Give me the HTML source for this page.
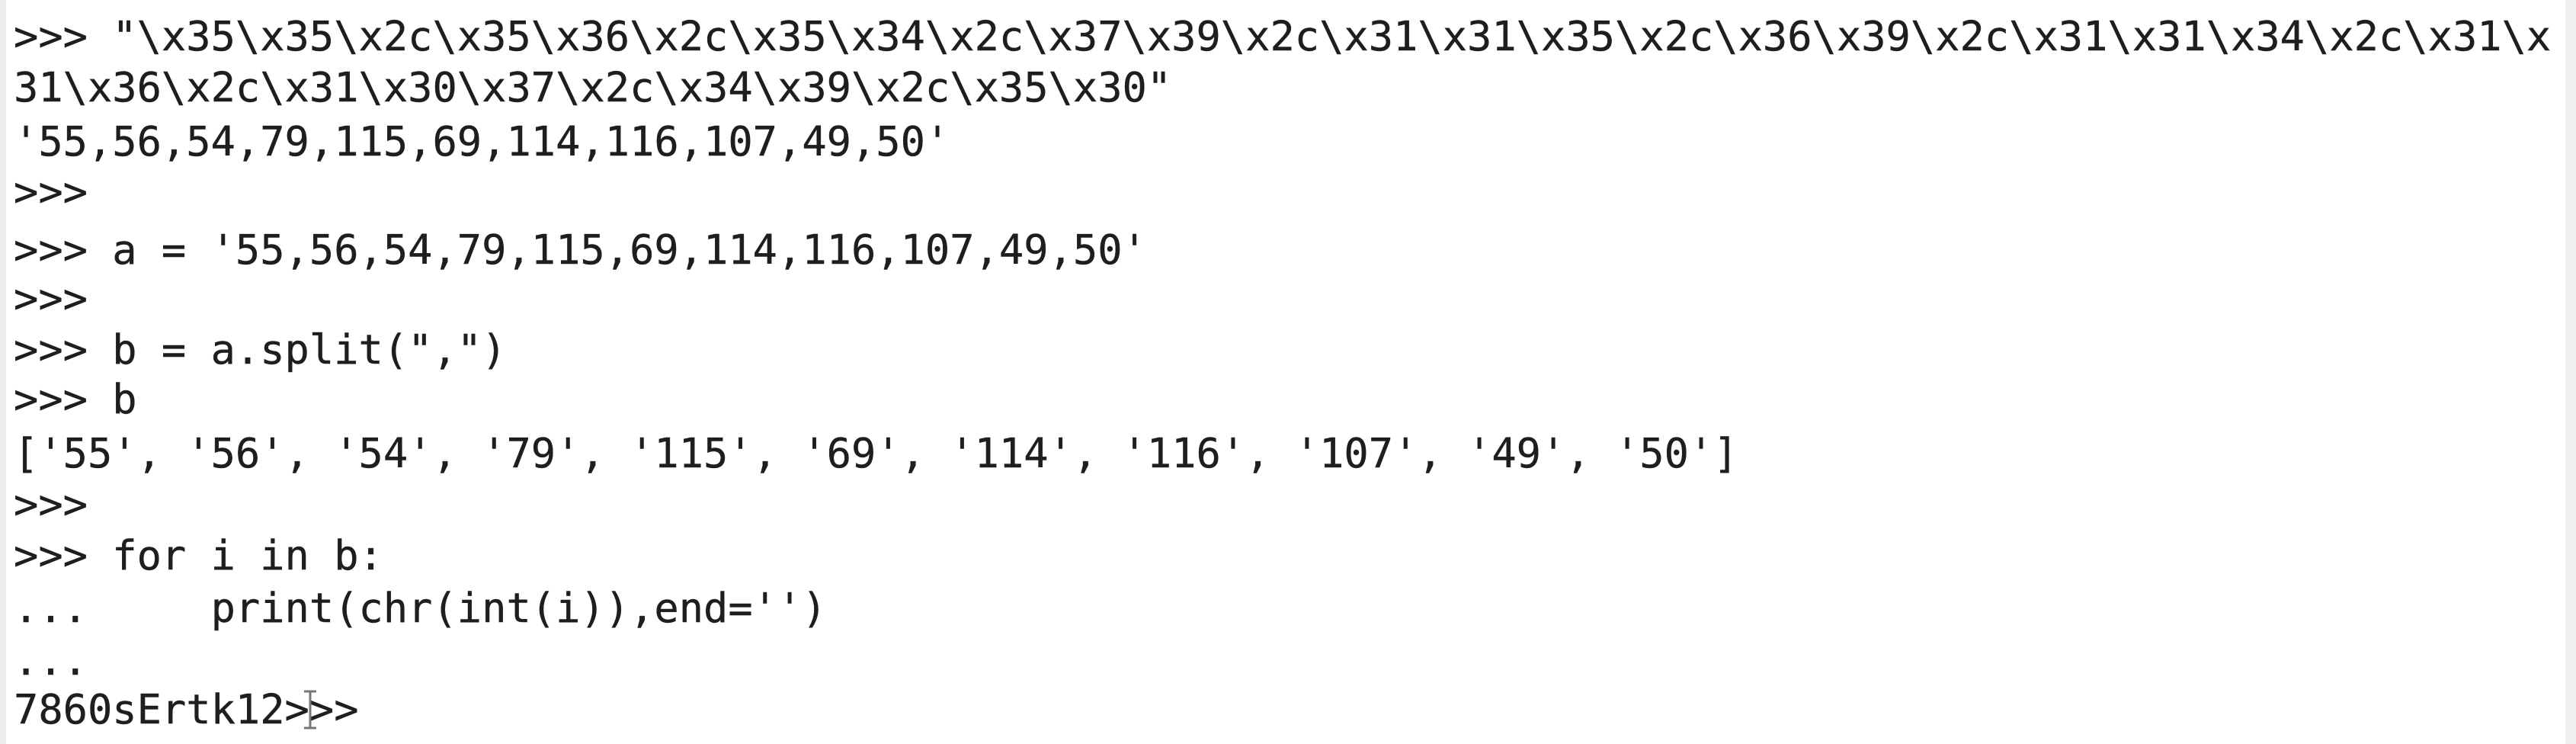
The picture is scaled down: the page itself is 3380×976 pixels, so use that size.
<!DOCTYPE html>
<html><head><meta charset="utf-8"><style>
html,body{margin:0;padding:0;}
body{width:3380px;height:976px;background:#fff;position:relative;overflow:hidden;}
.l{position:absolute;left:18px;height:68px;line-height:68px;font-family:"DejaVu Sans Mono","Liberation Mono",monospace;font-size:53.7px;color:#1e1e1e;white-space:pre;-webkit-text-stroke:0.4px #1e1e1e;}
.ls{position:absolute;left:0;top:0;width:8px;height:976px;background:#ececec;}
.rs{position:absolute;right:0;top:0;width:14px;height:976px;background:#efefef;}
</style></head><body>
<div class="ls"></div><div class="rs"></div>
<div class="l" style="top:14px">&gt;&gt;&gt; "\x35\x35\x2c\x35\x36\x2c\x35\x34\x2c\x37\x39\x2c\x31\x31\x35\x2c\x36\x39\x2c\x31\x31\x34\x2c\x31\x</div>
<div class="l" style="top:81px">31\x36\x2c\x31\x30\x37\x2c\x34\x39\x2c\x35\x30"</div>
<div class="l" style="top:152px">'55,56,54,79,115,69,114,116,107,49,50'</div>
<div class="l" style="top:218px">&gt;&gt;&gt;</div>
<div class="l" style="top:294px">&gt;&gt;&gt; a = '55,56,54,79,115,69,114,116,107,49,50'</div>
<div class="l" style="top:358px">&gt;&gt;&gt;</div>
<div class="l" style="top:425px">&gt;&gt;&gt; b = a.split(",")</div>
<div class="l" style="top:490px">&gt;&gt;&gt; b</div>
<div class="l" style="top:561px">['55', '56', '54', '79', '115', '69', '114', '116', '107', '49', '50']</div>
<div class="l" style="top:628px">&gt;&gt;&gt;</div>
<div class="l" style="top:695px">&gt;&gt;&gt; for i in b:</div>
<div class="l" style="top:764px">...     print(chr(int(i)),end='')</div>
<div class="l" style="top:833px">...</div>
<div class="l" style="top:897px">7860sErtk12&gt;&gt;&gt;</div>
<svg style="position:absolute;left:397px;top:905px" width="20" height="52"><path d="M2 2h16M10 2v48M2 50h16" stroke="#777" stroke-width="3" fill="none"/></svg>
</body></html>
